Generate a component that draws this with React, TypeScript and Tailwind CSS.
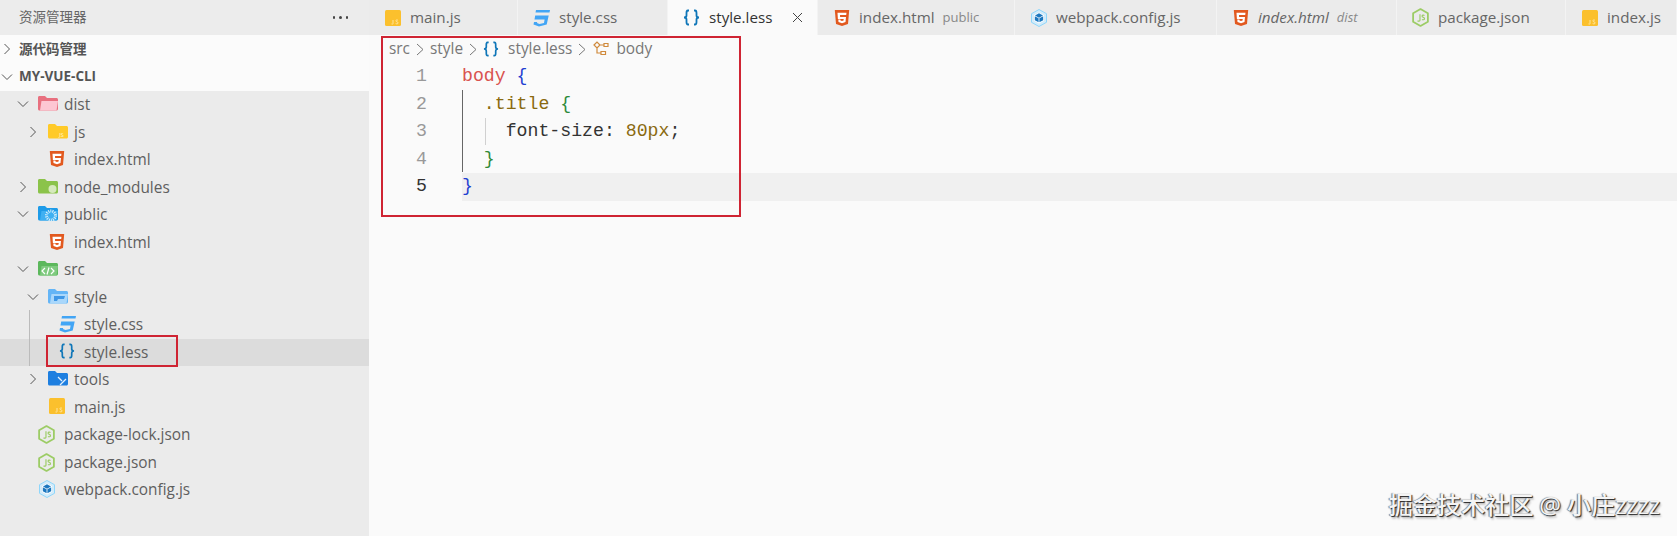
import type { ReactNode } from 'react';

const ui = 'font-["Open_Sans","Noto_Sans_CJK_SC",sans-serif]';

function Chevron({ open }: { open?: boolean }) {
  return (
    <svg width="12" height="12" viewBox="0 0 12 12" fill="none" stroke="#555" strokeWidth="1">
      {open ? <path d="M1 3.5 6 8.5 11 3.5" /> : <path d="M3.5 1 8.5 6 3.5 11" />}
    </svg>
  );
}

function Html() {
  return (
    <svg width="16" height="18" viewBox="0 0 16 18">
      <path d="M.8 1h14.400l-1.200 14L8 17l-6-2z" fill="#e2591f" />
      <path d="M3.500 3.800h9l-.3 2.300H6l.1 1.900h5.900l-.5 5L8 14.200 4.500 13l-.2-2.500h2.100l.1 1.100 1.500.5 1.600-.5.1-1.600H3.900z" fill="#fff" />
    </svg>
  );
}

function Css() {
  return (
    <svg width="17" height="18" viewBox="0 0 17 18">
      <path d="M3 1h14l-.5 2.500H2.500z M2.200 6.500h13.500l-2 9L6 17.500 0.500 15.500 1 13h3.200l-.2 1 2.500 1 4.500-1 .6-3.500H1.500z" fill="#42a5f5" />
    </svg>
  );
}

function Braces({ size = 17 }: { size?: number }) {
  return (
    <svg width={size} height={size} viewBox="0 0 17 17" fill="none" stroke="#0f76b8" strokeWidth="1.8">
      <path d="M6 1.500H5C3.500 1.500 3.500 3 3.500 4v2.500c0 1-.8 2-2.500 2 1.700 0 2.500 1 2.500 2V13c0 1 0 2.500 1.500 2.500h1" />
      <path d="M11 1.500h1c1.500 0 1.500 1.500 1.500 2.500v2.500c0 1 .8 2 2.500 2-1.700 0-2.500 1-2.500 2V13c0 1 0 2.500-1.500 2.500h-1" />
    </svg>
  );
}

function Js() {
  return (
    <svg width="16" height="16" viewBox="0 0 16 16">
      <rect width="16" height="16" rx="1.500" fill="#fbc02d" />
      <path d="M8 10v3.500c0 .8-1 .8-1.500.4M13 10.300c-.8-.6-2.300-.4-2.200.6.100 1 2.300.8 2.300 2 0 1.100-1.600 1.200-2.500.5" fill="none" stroke="#ffe9a8" strokeWidth=".9" />
    </svg>
  );
}

function Node() {
  return (
    <svg width="17" height="19" viewBox="0 0 16 18" fill="none" strokeLinejoin="round">
      <path d="M8 1l7 4v8l-7 4-7-4V5z" stroke="#9ccc65" strokeWidth="1.700" />
      <path d="M7.500 6v5.500c0 1.200-1.500 1.200-2.300.6M11.800 7c-1-.6-2.300-.3-2.300.8 0 1.200 2.300.9 2.300 2.300 0 1.200-1.500 1.300-2.400.7" stroke="#9ccc65" strokeWidth="1.100" />
    </svg>
  );
}

function Webpack({ size = 16 }: { size?: number }) {
  return (
    <svg width={size} height={size + 2} viewBox="0 0 16 18">
      <path d="M8 .5l7.500 4.200v8.600L8 17.500.5 13.300V4.700z" fill="#d3ecfa" stroke="#8ed6fb" strokeWidth="1" />
      <path d="M8 3.500l5 2.800v5.400L8 14.500l-5-2.800V6.300z" fill="#fff" />
      <path d="M8 4.300l4 2.200-4 2.200-4-2.200zM3.800 7.200 7.600 9.300v4l-3.800-2.100zM12.200 7.200 8.400 9.300v4l3.800-2.100z" fill="#1c78c0" />
    </svg>
  );
}

function Folder({ color, light, mark, open }: { color: string; light: string; mark?: ReactNode; open?: boolean }) {
  return (
    <svg width="20" height="17" viewBox="0 0 20 17">
      <path d="M0 2.500C0 1.500.7 1 1.500 1H7l2 2h9.500c.8 0 1.500.6 1.500 1.500V14c0 .8-.7 1.500-1.500 1.500h-17C.7 15.500 0 14.800 0 14z" fill={color} />
      {open && <path d="M3.500 6H20l-1.500 9.500H2z" fill={light} />}
      {mark}
    </svg>
  );
}

const distFolder = <Folder color="#e8707f" light="#fdc6d2" open />;
const jsFolder = (
  <Folder
    color="#ffca28"
    light="#ffca28"
    mark={<text x="11" y="14" fontSize="6" fill="#fff3c4" fontFamily="Open Sans">JS</text>}
  />
);
const nodeFolder = <Folder color="#8bc34a" light="#8bc34a" mark={<circle cx="14.500" cy="11" r="4" fill="#d6e9bd" />} />;
const publicFolder = (
  <Folder color="#1e9be8" light="#3fb0f2" open mark={<circle cx="13" cy="10.500" r="4.500" fill="none" stroke="#d5eefc" strokeDasharray="1 1" strokeWidth="3" />} />
);
const srcFolder = (
  <Folder color="#5cb85c" light="#7fca7f" open mark={<path d="M7 8 4 11 7 14M11 7.500l-2 7M13 8l3 3-3 3" fill="none" stroke="#fff" strokeWidth="1.200" />} />
);
const styleFolder = (
  <Folder color="#64b5f6" light="#a9d7fb" open mark={<path d="M6 8h11l-1 3H10l-1 2H6z" fill="#3f97e6" />} />
);
const toolsFolder = (
  <Folder color="#1e7fe0" light="#1e7fe0" mark={<path d="M10 7l4 4M18 9l-6 6" fill="none" stroke="#e3f0fc" strokeWidth="1.300" />} />
);

type TreeRow = {
  name: string;
  chevronX?: number;
  open?: boolean;
  iconX: number;
  icon: ReactNode;
  textX: number;
  selected?: boolean;
};

const rows: TreeRow[] = [
  { name: 'dist', chevronX: 17, open: true, iconX: 38, icon: distFolder, textX: 64 },
  { name: 'js', chevronX: 27, iconX: 48, icon: jsFolder, textX: 74 },
  { name: 'index.html', iconX: 49, icon: <Html />, textX: 74 },
  { name: 'node_modules', chevronX: 17, iconX: 38, icon: nodeFolder, textX: 64 },
  { name: 'public', chevronX: 17, open: true, iconX: 38, icon: publicFolder, textX: 64 },
  { name: 'index.html', iconX: 49, icon: <Html />, textX: 74 },
  { name: 'src', chevronX: 17, open: true, iconX: 38, icon: srcFolder, textX: 64 },
  { name: 'style', chevronX: 27, open: true, iconX: 48, icon: styleFolder, textX: 74 },
  { name: 'style.css', iconX: 59, icon: <Css />, textX: 84 },
  { name: 'style.less', iconX: 59, icon: <Braces size={16} />, textX: 84, selected: true },
  { name: 'tools', chevronX: 27, iconX: 48, icon: toolsFolder, textX: 74 },
  { name: 'main.js', iconX: 49, icon: <Js />, textX: 74 },
  { name: 'package-lock.json', iconX: 38, icon: <Node />, textX: 64 },
  { name: 'package.json', iconX: 38, icon: <Node />, textX: 64 },
  { name: 'webpack.config.js', iconX: 39, icon: <Webpack />, textX: 64 },
];

function Row({ row }: { row: TreeRow }) {
  return (
    <div
      className={`relative h-[27.5px] text-[15.4px] leading-[28px] text-[#5f5f5f] ${row.selected ? 'bg-[#dcdcdc]' : ''}`}
      style={{ paddingLeft: row.textX }}
    >
      {row.chevronX !== undefined && (
        <span className="absolute top-[7px]" style={{ left: row.chevronX }}>
          <Chevron open={row.open} />
        </span>
      )}
      <span className="absolute top-[4px]" style={{ left: row.iconX }}>
        {row.icon}
      </span>
      {row.name}
    </div>
  );
}

function Sidebar() {
  return (
    <aside className="relative flex w-[369px] shrink-0 flex-col bg-[#ebebeb]">
      <div className="flex h-[35px] items-center justify-between bg-[#ececec] pl-[19px] pr-[21px] text-[13.5px] text-[#666]">
        <span>资源管理器</span>
        <span className="flex gap-[4px]">
          <i className="size-[2.5px] rounded-full bg-[#444]" />
          <i className="size-[2.5px] rounded-full bg-[#444]" />
          <i className="size-[2.5px] rounded-full bg-[#444]" />
        </span>
      </div>
      <div className="bg-[#fbfbfb]">
        <div className="flex h-[28px] items-center gap-[1px] pl-[1px] text-[13.5px] font-bold text-[#555]">
          <Chevron />
          <span className="ml-[5px]">源代码管理</span>
        </div>
        <div className="flex h-[28px] items-center gap-[1px] pl-[1px] pb-[1px] text-[13.5px] font-bold text-[#555]">
          <Chevron open />
          <span className="ml-[5px]">MY-VUE-CLI</span>
        </div>
      </div>
      <div className="relative">
        {rows.map((row, i) => (
          <Row key={i} row={row} />
        ))}
        <div className="absolute left-[29px] top-[219px] h-[56px] w-px bg-[#bbb]" />
      </div>
      {/* marker round the selected file */}
      <div className="absolute left-[46px] top-[335px] h-[32px] w-[132px] border-[2px] border-[#cf2433]" />
    </aside>
  );
}

type TabItem = { name: string; hint?: string; icon: ReactNode; width: number; italic?: boolean; active?: boolean };

const tabs: TabItem[] = [
  { name: 'main.js', icon: <Js />, width: 149 },
  { name: 'style.css', icon: <Css />, width: 150 },
  { name: 'style.less', icon: <Braces />, width: 150, active: true },
  { name: 'index.html', hint: 'public', icon: <Html />, width: 197 },
  { name: 'webpack.config.js', icon: <Webpack size={16} />, width: 202 },
  { name: 'index.html', hint: 'dist', icon: <Html />, width: 180, italic: true },
  { name: 'package.json', icon: <Node />, width: 169 },
  { name: 'index.js', icon: <Js />, width: 111 },
];

function Tab({ tab }: { tab: TabItem }) {
  return (
    <div
      className={`flex h-[35px] shrink-0 items-center border-r border-[#f3f3f3] pl-[15px] text-[15.2px] ${
        tab.active ? 'bg-[#fafafa] text-[#333]' : 'bg-[#ebebeb] text-[#666]'
      } ${tab.italic ? 'italic' : ''}`}
      style={{ width: tab.width }}
    >
      <span className="mr-[9px] flex w-[17px] justify-center">{tab.icon}</span>
      <span>{tab.name}</span>
      {tab.hint && <span className="ml-[8px] text-[13px] text-[#888]">{tab.hint}</span>}
      {tab.active && (
        <svg className="ml-auto mr-[14px]" width="11" height="11" viewBox="0 0 11 11" stroke="#444" strokeWidth="1">
          <path d="M1 1l9 9M10 1l-9 9" />
        </svg>
      )}
    </div>
  );
}

function Crumb({ children }: { children: ReactNode }) {
  return (
    <>
      {children}
      <svg className="mx-[6px]" width="8" height="13" viewBox="0 0 8 13" fill="none" stroke="#777" strokeWidth="1">
        <path d="M1 1l6 5.500L1 12" />
      </svg>
    </>
  );
}

const codeLines: ReactNode[] = [
  <><span className="text-[#d9534f]">body</span> <span className="text-[#1f3fd1]">{'{'}</span></>,
  <>{'  '}<span className="text-[#8a6a10]">.title</span> <span className="text-[#2f8a3a]">{'{'}</span></>,
  <>{'    '}<span className="text-[#333]">font-size:</span> <span className="text-[#8a6a10]">80px</span><span className="text-[#333]">;</span></>,
  <>{'  '}<span className="text-[#2f8a3a]">{'}'}</span></>,
  <span className="text-[#1f3fd1]">{'}'}</span>,
];

function Editor() {
  return (
    <main className="relative min-w-0 flex-1 bg-[#fafafa]">
      <div className="flex">
        {tabs.map((tab) => (
          <Tab key={tab.name + (tab.hint ?? '')} tab={tab} />
        ))}
      </div>
      <div className="flex h-[28px] items-center pl-[20px] text-[15.4px] text-[#777]">
        <Crumb>src</Crumb>
        <Crumb>style</Crumb>
        <Crumb>
          <Braces size={16} />
          <span className="ml-[9px]">style.less</span>
        </Crumb>
        <svg className="ml-[1px] mr-[6px]" width="17" height="16" viewBox="0 0 17 16" fill="none" stroke="#d08a3c" strokeWidth="1.200">
          <path d="M1 4l3-3 3 3-3 3zM4 7v5h4M7 4h4M11 2.500h4v3h-4zM8 10.500h4.500v3H8z" />
        </svg>
        <span>body</span>
      </div>
      <div className="relative font-['Liberation_Mono',monospace] text-[18.2px] leading-[27.5px]">
        {codeLines.map((line, i) => (
          <div key={i} className="flex h-[27.5px]">
            <span className={`w-[59px] pr-[1px] text-right ${i === 4 ? 'text-[#333]' : 'text-[#999]'}`}>{i + 1}</span>
            <span className={`ml-[34px] flex-1 whitespace-pre ${i === 4 ? 'bg-[#f0f0f0]' : ''}`}>{line}</span>
          </div>
        ))}
        <div className="absolute left-[93px] top-[27px] h-[82px] w-px bg-[#666]" />
        <div className="absolute left-[116px] top-[55px] h-[27px] w-px bg-[#d0d0d0]" />
      </div>
      {/* marker round the breadcrumb and code */}
      <div className="absolute left-[12px] top-[36px] h-[181px] w-[360px] border-[2px] border-[#cf2433]" />
      <div className="absolute right-[17px] top-[487px] text-[24.3px] font-medium tracking-[-0.2px] text-[#f4f4f4] [text-shadow:1px_1px_1px_#222,-1px_0_1px_#777,2px_3px_2px_#ccc]">
        掘金技术社区 @ 小庄zzzz
      </div>
    </main>
  );
}

export default function App() {
  return (
    <div className={`flex h-[536px] w-[1677px] overflow-hidden ${ui}`}>
      <Sidebar />
      <Editor />
    </div>
  );
}
